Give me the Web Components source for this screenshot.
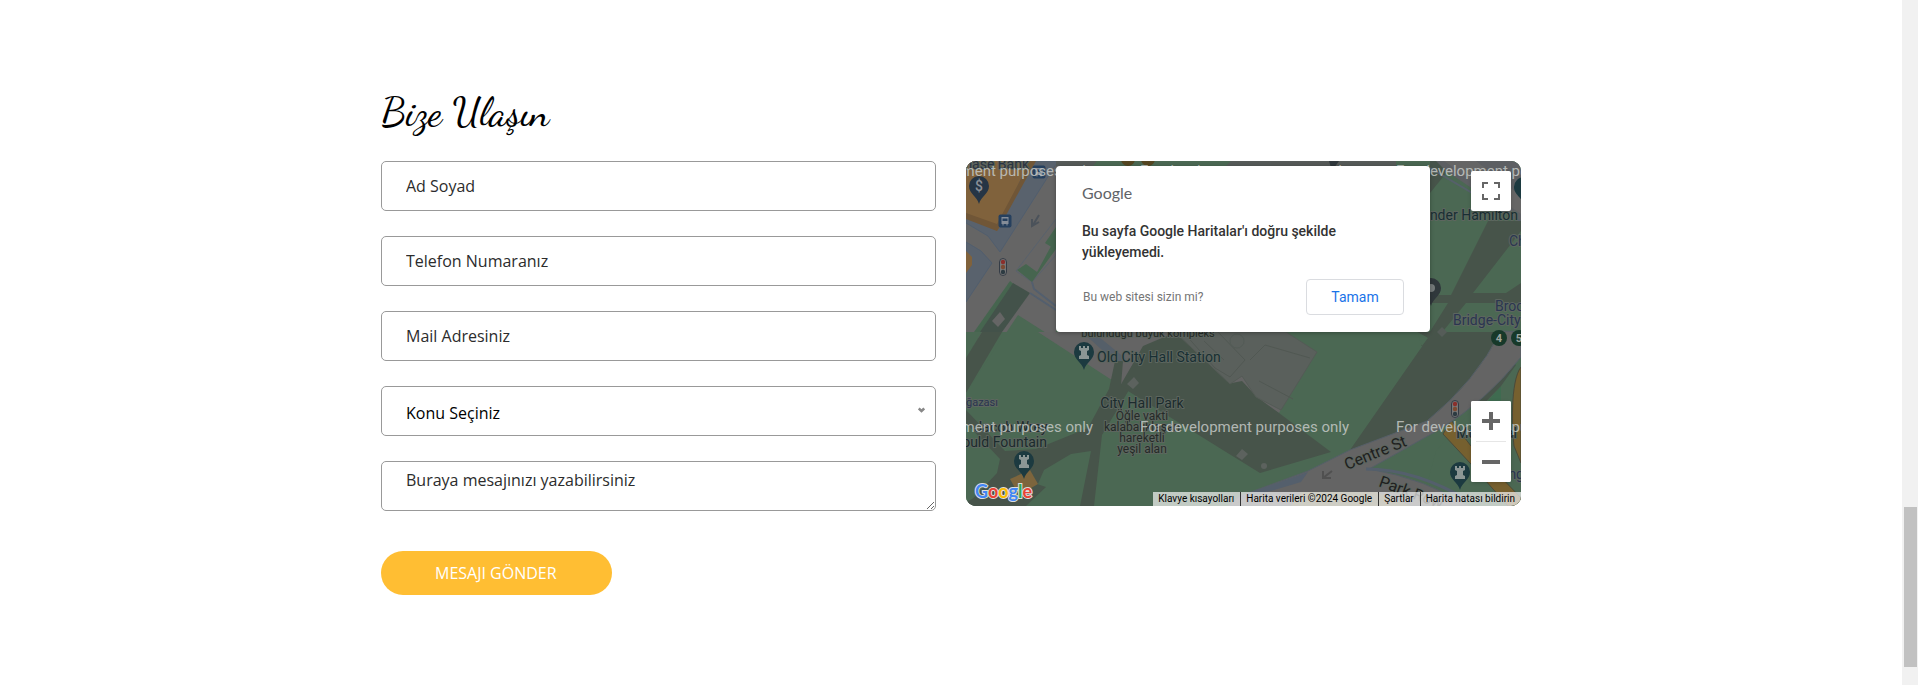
<!DOCTYPE html>
<html lang="tr">
<head>
<meta charset="utf-8">
<title>Bize Ulaşın</title>
<style>
body { margin: 0; background: #fff; font-family: "Open Sans", sans-serif; font-size: 16px; color: #000; }
</style>
</head>
<body>
<page-frame>
  <contact-section>
    <section-title slot="title">Bize Ulaşın</section-title>
    <contact-form slot="form">
      <text-field type="text" hint="Ad Soyad"></text-field>
      <text-field type="tel" hint="Telefon Numaranız"></text-field>
      <text-field type="email" hint="Mail Adresiniz"></text-field>
      <subject-select></subject-select>
      <message-box hint="Buraya mesajınızı yazabilirsiniz"></message-box>
      <pill-button slot="action">MESAJI GÖNDER</pill-button>
    </contact-form>
    <map-view slot="map">
      <map-dialog slot="dialog">Bu sayfa Google Haritalar'ı doğru şekilde yükleyemedi.</map-dialog>
      <map-controls slot="controls"></map-controls>
      <map-credits slot="credits"></map-credits>
    </map-view>
  </contact-section>
</page-frame>

<script>
const component = (name, render) => customElements.define(name, class extends HTMLElement {
  constructor() {
    super();
    this.attachShadow({ mode: "open" }).innerHTML = render(this);
  }
});

component("page-frame", () => `
<style>
  :host { display: flex; min-height: 100vh; }
  main { flex: 1; min-width: 0; }
  .rail { width: 16px; box-sizing: border-box; background: #f1f1f1; padding: 0 1px 18px 2px; display: flex; align-items: flex-end; }
  .thumb { flex: 1; height: 160px; background: #c1c1c1; }
</style>
<main><slot></slot></main>
<div class="rail" aria-hidden="true"><div class="thumb"></div></div>`);

component("contact-section", () => `
<style>
  :host { display: block; max-width: 1140px; margin: 0 auto; padding: 88px 15px; }
  .cols { display: grid; grid-template-columns: 1fr 1fr; gap: 30px; align-items: start; margin-top: 25px; }
  @media (max-width: 800px) { .cols { grid-template-columns: 1fr; } }
</style>
<slot name="title"></slot>
<div class="cols"><slot name="form"></slot><slot name="map"></slot></div>`);

component("section-title", () => `
<style>
  :host { display: block; }
  h2 { margin: 0; font: 500 40px/48px "Dancing Script", "Liberation Serif", cursive; }
</style>
<h2><slot></slot></h2>`);

component("contact-form", () => `
<style>
  :host { display: block; min-width: 0; }
  form { display: flex; flex-direction: column; }
  .fields { display: grid; gap: 25px; }
  .action { margin-top: 40px; }
</style>
<form>
  <div class="fields"><slot></slot></div>
  <div class="action"><slot name="action"></slot></div>
</form>`);

const fieldStyle = `
  :host { display: block; }
  input, select, textarea { display: block; box-sizing: border-box; width: 100%; height: 50px; margin: 0; border: 1px solid #999; border-radius: 5px; background: #fff; padding: 0 24px; font: 400 16px/24px "Open Sans", sans-serif; color: #000; outline: 0; }
  ::placeholder { color: #2c2c2c; opacity: 1; }`;

component("text-field", el => `
<style>${fieldStyle}</style>
<input type="${el.getAttribute("type")}" placeholder="${el.getAttribute("hint")}" aria-label="${el.getAttribute("hint")}">`);

component("subject-select", () => `
<style>${fieldStyle}
  :host { position: relative; }
  select { appearance: none; padding-top: 4px; }
  svg { position: absolute; right: 11px; top: 21px; width: 7px; height: 6px; pointer-events: none; }
</style>
<select aria-label="Konu Seçiniz"><option>Konu Seçiniz</option></select>
<svg viewBox="0 0 7 6" aria-hidden="true"><path d="M.8 1.500L3.500 4L6.200 1.500" fill="none" stroke="#888" stroke-width="2.400"/></svg>`);

component("message-box", el => `
<style>${fieldStyle}
  textarea { padding: 6px 24px; overflow: hidden; resize: both; }
</style>
<textarea placeholder="${el.getAttribute("hint")}" aria-label="${el.getAttribute("hint")}"></textarea>`);

component("pill-button", () => `
<style>
  :host { display: inline-block; vertical-align: top; }
  button { display: block; border: 0; border-radius: 45px; background: #ffbe33; color: #fff; padding: 10px 55px 10px 54px; font: 400 16px/24px "Open Sans", sans-serif; }
</style>
<button type="submit"><slot></slot></button>`);

component("map-dialog", () => `
<style>
  :host { display: block; width: 374px; max-width: 100%; min-height: 166px; box-sizing: border-box; padding: 15px 26px 17px; background: #fff; border-radius: 4px; font-family: Roboto, sans-serif; box-shadow: 0 1px 4px rgba(0,0,0,.3); }
  .brand { font: 400 16px/24px Lato, sans-serif; color: #5f6368; }
  p { margin: 16px 0 0; font-size: 14px; line-height: 21px; font-weight: 500; color: #333; padding-right: 50px; }
  .row { display: flex; justify-content: space-between; align-items: center; margin-top: 16px; }
  a { font-size: 12px; line-height: 18px; color: #757575; text-decoration: none; padding-left: 1px; }
  button { width: 98px; height: 36px; border: 1px solid #dadce0; border-radius: 4px; background: #fff; color: #1a73e8; font: 400 14px/20px Roboto, sans-serif; padding: 0; }
</style>
<div class="brand">Google</div>
<p><slot></slot></p>
<div class="row"><a href="#">Bu web sitesi sizin mi?</a><button type="button">Tamam</button></div>`);

component("map-controls", () => `
<style>
  :host { display: flex; flex-direction: column; justify-content: space-between; height: 100%; }
  button { display: grid; place-items: center; width: 40px; height: 40px; padding: 0; border: 0; background: #fff; border-radius: 2px; }
  .zoom { background: #fff; border-radius: 2px; display: grid; }
  .full, .zoom { box-shadow: 0 1px 4px -1px rgba(0,0,0,.3); }
  hr { width: 30px; height: 1px; margin: 0 auto; border: 0; background: #e6e6e6; }
  svg { width: 18px; height: 18px; fill: #666; }
</style>
<button class="full" type="button" aria-label="Tam ekran"><svg viewBox="0 0 18 18"><path d="M0 0v6h2V2h4V0zM12 0v2h4v4h2V0zM16 16h-4v2h6v-6h-2zM2 12H0v6h6v-2H2z"/></svg></button>
<div class="zoom">
  <button type="button" aria-label="Yakınlaştır"><svg viewBox="0 0 18 18"><path d="M18 7h-7V0H7v7H0v4h7v7h4v-7h7z"/></svg></button>
  <hr>
  <button type="button" aria-label="Uzaklaştır"><svg viewBox="0 0 18 18"><path d="M0 7h18v4H0z"/></svg></button>
</div>`);

component("map-credits", () => `
<style>
  :host { display: flex; height: 14px; background: rgba(245,245,245,.7); font: 400 10px/14px Roboto, sans-serif; white-space: nowrap; }
  a, button, span { display: block; border: 0 solid #333; margin: 0; background: none; font: inherit; color: #000; text-decoration: none; padding: 0 6px 0 5px; }
  a, span { border-left-width: 1px; }
</style>
<button type="button">Klavye kısayolları</button><span>Harita verileri ©2024 Google</span><a href="#">Şartlar</a><a href="#">Harita hatası bildirin</a>`);

component("map-view", () => `
<style>
  :host { display: grid; position: relative; height: 345px; min-width: 0; border-radius: 10px; overflow: hidden; background: #4b6853; }
  .canvas { position: absolute; inset: 0; width: 100%; height: 100%; }
  .dialog { position: absolute; top: 5px; left: 0; right: 0; display: flex; justify-content: center; padding-right: 1px; }
  .controls { position: absolute; top: 10px; right: 10px; bottom: 24px; }
  .credits { position: absolute; right: 0; bottom: 0; }
  text { font-family: Roboto, sans-serif; font-size: 14px; }
  .halo text { paint-order: stroke; stroke: #5d665f; stroke-width: 2px; stroke-linejoin: round; }
  .halo .street { font-size: 16px; font-weight: 400; }
  .small text { font-size: 12px; }
  .small .tiny { font-size: 11px; }
  .water text { font-family: Roboto, sans-serif; font-size: 15px; fill: #c4c8c5; opacity: .85; }
</style>
<svg class="canvas" viewBox="0 0 555 345" preserveAspectRatio="xMidYMid slice">
  <defs>
    <g id="pin"><path d="M0 18C-2 10-10 8-10 0a10 10 0 0 1 20 0C10 8 2 10 0 18z"/></g>
    <g id="rook" fill="#8b9695"><path d="M-5-6h2v2h2v-2h2v2h2v-2h2v4l-2 1v4l2 1v3H-5V4l2-1v-4l-2-1z"/></g>
    <g id="bus"><rect x="-6.500" y="-6.500" width="13" height="13" rx="2" fill="#26405e"/><path d="M-3.500-4h7v7h-1v1.500h-1V3h-3v1.500h-1V3h-1z" fill="#858d98"/><path d="M-2.500-2.500h5V0h-5z" fill="#26405e"/></g>
    <g id="light"><rect x="-3.500" y="-8.500" width="7" height="17" rx="3.500" fill="#777" stroke="#343c46"/><circle cy="-5" r="2.200" fill="#8b2f2c"/><circle r="2.200" fill="#7d4a32"/><circle cy="5" r="2.200" fill="#2d3b42"/></g>
  </defs>
  <rect width="555" height="345" fill="#4b6853"/>

  <!-- streets and blocks in the north-west corner -->
  <path d="M0 0H125L90 60V171H36L0 180z" fill="#656565"/>
  <path d="M0 0H92L34 91L22 75L0 62z" fill="#59626d" stroke="#515e6e"/>
  <path d="M0 81L15 90L26 102L0 141z" fill="#59626d" stroke="#515e6e"/>
  <path d="M0 0H63L31 70L0 52z" fill="#80623c"/>
  <path d="M0 52L31 63L57 14L63 0H70L33 67L31 70L0 58z" fill="#705637"/>
  <path d="M0 90L6 96V104L0 112z" fill="#80623c"/>
  <path d="M90 58L50 110L66 121L90 94z" fill="#656565" stroke="#59626d"/>
  <path d="M90 66L79 82L87 87L90 86zM60 103L51 109L66 121L90 88V76L71 111z" fill="#46654f"/>
  <path d="M44 120L8 171H20L50 125z" fill="#46654f"/>
  <path d="M47 122L64 132L36 171H14z" fill="#43524a"/>
  <path d="M34 151L39 158L32 166L26 160z" fill="#656565"/>
  <path d="M52 154L96 182V215L36 178z" fill="#4b6853"/>
  <path d="M66 121L68 128L90 145M64 132L90 149" fill="none" stroke="#535f6e" stroke-width="2"/>
  <path d="M73 54L67 64M66 58V65L73 61" fill="none" stroke="#4b525a" stroke-width="2"/>

  <!-- park lawns and walks -->
  <path d="M0 171H16L0 197z" fill="#4b6853"/>
  <path d="M16 171H36L0 232V197z" fill="#47544a"/>
  <path d="M36 171V177L8 220L0 232V345H300V171z" fill="#4b6853"/>
  <path d="M72 171H320L345 188L313 252L284 235L155 225z" fill="#646464"/>
  <path d="M127 171L160 198L154 205L116 171z" fill="#555f69"/>
  <path d="M177 185L210 171L266 222L276 220L291 236L313 252L365 291L294 312L260 291L154 225z" fill="#47544a"/>
  <path d="M209 171H320L351 191L315 249L290 236L276 215L264 223z" fill="#5a605c" stroke="#545b56"/>
  <path d="M218 172L249 207L264 216L279 199L252 171M284 199L299 184L344 197M293 220L327 238M238 180L258 199" fill="none" stroke="#515853"/>
  <circle cx="271" cy="180" r="7" fill="none" stroke="#535b56"/>
  <path d="M168 216L173 222L167 228L161 223zM276 288L282 293L276 299L270 295z" fill="#5c625e"/>
  <circle cx="298" cy="305" r="3" fill="#5c625e"/>
  <path d="M149 200L157 200L155 225L163 229L136 274L128 345H114L125 290L105 293L78 309L68 332L38 345H0L31 312L34 298L0 262V249L39 290L70 288L122 267L143 228z" fill="#47544a"/>
  <path d="M0 345V341L50 316L80 326L60 345z" fill="#47544a"/>
  <path d="M44 318L64 309L72 323L53 334z" fill="#7d653d"/>

  <!-- north edge and north-east corner -->
  <path d="M90 0H131L127 5H90zM265 0H430V5H260z" fill="#565b59"/>
  <circle cx="162" cy="-2" r="7" fill="#544622"/><circle cx="182" cy="-2" r="7" fill="#544622"/>
  <path d="M464 0H490L464 32z" fill="#47544a"/>
  <path d="M470 0H555V60L480 10z" fill="#5d6063"/>
  <path d="M478 0H510L555 35V53z" fill="#666"/>
  <path d="M464 7L555 61" fill="none" stroke="#56606b" stroke-width="2"/>
  <path d="M522 60H555V70L507 132H540L555 122V142H500L465 185H455L482 142H464V134H485z" fill="#47544a"/>
  <path d="M363 0H373L366 10z" fill="#30383c"/>

  <!-- Centre St and Park Row -->
  <path d="M451 171H555V195L480 265L384 289L462 177z" fill="#47544a"/>
  <path d="M451 171L462 177L456 185z" fill="#4b6853"/>
  <path d="M476 166l5 5-5 5-5-5z" fill="#555c58"/>
  <path d="M544 201L555 196V345H455L470 290L505 250z" fill="#4b6853"/>
  <path d="M535 225V254L508 256z" fill="#3f6b50"/>
  <path d="M505 250L544 201L550 204L535 225L505 256z" fill="#47544a"/>
  <path d="M485 259L505 285L555 337V345H542L504 302L477 273z" fill="#76602f" stroke="#4b4a3a"/>
  <path d="M555 206C544 220 546 270 548 285L555 302z" fill="#76602f" stroke="#4b4a3a"/>
  <path d="M274 335L342 310L384 289L461 260Q510 220 535 170L555 171V196Q520 240 474 268L403 308Q460 318 502 345H262z" fill="#646464" stroke="#565f68"/>
  <path d="M274 335L342 311L335 321L274 339z" fill="#545f6c"/>
  <path d="M400 308Q450 308 503 340" fill="none" stroke="#545f6c" stroke-width="3"/>
  <path d="M366 310L357 317M357 310V317H365" fill="none" stroke="#505050" stroke-width="2"/>
  <path d="M335 331H410L445 345H325z" fill="#746f50"/>

  <use href="#bus" x="39" y="60"/><use href="#bus" x="73" y="11"/>
  <use href="#light" x="37" y="106"/>
  <use href="#light" x="489" y="248"/>
  <g fill="#263545"><use href="#pin" x="13" y="25"/></g>
  <g fill="#1c3a40"><use href="#pin" x="118" y="191"/><use href="#pin" x="58" y="300"/><use href="#pin" x="494" y="311"/><use href="#pin" x="558" y="26"/></g>
  <g fill="#30383c"><use href="#pin" x="465" y="127"/></g>
  <circle cx="465" cy="127" r="4" fill="#747a7a"/>
  <use href="#rook" x="118" y="191"/><use href="#rook" x="58" y="300"/><use href="#rook" x="494" y="311"/>
  <text x="13" y="30" text-anchor="middle" fill="#8b9098" font-weight="500">$</text>
  <g fill="#17392a"><circle cx="533" cy="177" r="8"/><circle cx="553" cy="177" r="8"/></g>
  <g fill="#9da6a0" text-anchor="middle" font-weight="700" class="small"><text class="tiny" x="533" y="181">4</text><text class="tiny" x="553" y="181">5</text></g>

  <g class="halo" fill="#1b2b2d">
    <text x="63" y="8" text-anchor="end" fill="#2b3442">Chase Bank</text>
    <text x="552" y="59" text-anchor="end" fill="#182f33">Alexander Hamilton</text>
    <text x="543" y="85" fill="#2a3650">Chambers</text>
    <text x="529" y="150" fill="#2a3650">Brooklyn</text>
    <text x="487" y="164" fill="#2a3650">Bridge-City Hall</text>
    <text x="131" y="201" fill="#182f33">Old City Hall Station</text>
    <text x="176" y="247" text-anchor="middle">City Hall Park</text>
    <text x="45" y="271" text-anchor="middle">Jacob Wrey</text>
    <text x="81" y="286" text-anchor="end">Gould Fountain</text>
    <text x="551" y="277" text-anchor="end">Municipal</text>
    <text x="558" y="318" text-anchor="end" fill="#2a3650">Building</text>
    <text class="street" transform="translate(381 309) rotate(-22)" fill="#202020">Centre St</text>
    <text class="street" transform="translate(412 325) rotate(20)" fill="#202020">Park Row</text>
  </g>
  <g class="halo small" fill="#252b28" text-anchor="middle">
    <text class="tiny" x="182" y="176">bulunduğu büyük kompleks</text>
    <text class="tiny" x="32" y="245" text-anchor="end" fill="#2a3450">mağazası</text>
    <text x="176" y="259">Öğle vakti</text>
    <text x="176" y="270">kalabalıklaşan</text>
    <text x="176" y="281">hareketli</text>
    <text x="176" y="292">yeşil alan</text>
  </g>
  <g class="water">
    <text x="-82" y="15">For development purposes only</text><text x="174" y="15">For development purposes only</text><text x="430" y="15">For development purposes only</text>
    <text x="-82" y="271">For development purposes only</text><text x="174" y="271">For development purposes only</text><text x="430" y="271">For development purposes only</text>
  </g>
  <text x="9" y="337" style="font:700 18px Lato,sans-serif;paint-order:stroke;stroke:#ddd;stroke-width:2px"><tspan fill="#4285f4">G</tspan><tspan fill="#ea4335">o</tspan><tspan fill="#fbbc04">o</tspan><tspan fill="#4285f4">g</tspan><tspan fill="#34a853">l</tspan><tspan fill="#ea4335">e</tspan></text>
</svg>
<div class="credits"><slot name="credits"></slot></div>
<div class="controls"><slot name="controls"></slot></div>
<div class="dialog"><slot name="dialog"></slot></div>`);
</script>
</body>
</html>
